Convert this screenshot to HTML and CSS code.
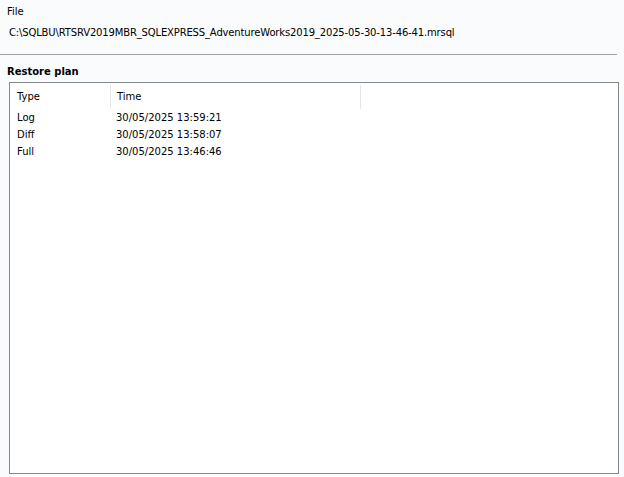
FILE: index.html
```html
<!DOCTYPE html>
<html>
<head>
<link rel="stylesheet" href="styles.css">
</head>
<body>
  <div class="wrapper">
    <div class="file-lbl">File</div>
    <div class="file-path">C:\SQLBU\RTSRV2019MBR_SQLEXPRESS_AdventureWorks2019_2025-05-30-13-46-41.mrsql</div>
    <div class="sep"></div>
    <div class="title">Restore plan</div>
    <div class="list">
      <div class="list-head">
        <div class="col-type">Type</div>
        <div class="col-time">Time</div>
        <div class="col-rest"></div>
      </div>
      <div class="list-row"><div class="col-type">Log</div><div class="col-time">30/05/2025 13:59:21</div></div>
      <div class="list-row"><div class="col-type">Diff</div><div class="col-time">30/05/2025 13:58:07</div></div>
      <div class="list-row"><div class="col-type">Full</div><div class="col-time">30/05/2025 13:46:46</div></div>
    </div>
  </div>
</body>
</html>
```

FILE: styles.css
```css
html, body{
  margin: 0;
  padding: 0;
  background-color: #fafbfd;
}

body{
  font-family: "DejaVu Sans", sans-serif;
  font-size: 10px;
  color: #000;
}

.wrapper{
  width: 624px;
  height: 477px;
  display: flex;
  flex-direction: column;
}

.file-lbl{
  margin: 5px 0 0 7px;
  line-height: 14px;
}

.file-path{
  margin: 7px 0 0 9px;
  line-height: 14px;
  letter-spacing: -0.15px;
}

.sep{
  margin-top: 14px;
  width: 617px;
  height: 1px;
  background-color: #a0a0a0;
}

.title{
  margin: 10px 0 0 7px;
  font-weight: bold;
  line-height: 14px;
}

.list{
  margin: 3px 0 0 9px;
  width: 608px;
  height: 390px;
  border: 1px solid #828790;
  background-color: #fff;
}

.list-head{
  display: flex;
  height: 24px;
  margin-top: 2px;
}

.list-head .col-type,
.list-head .col-time{
  border-right: 1px solid #e5e5e5;
  line-height: 24px;
}

.list-head .col-type{
  width: 93px;
}

.list-head .col-time{
  width: 243px;
}

.list-row{
  display: flex;
  height: 17px;
  line-height: 17px;
}

.col-type{
  width: 93px;
  padding-left: 7px;
}

.col-time{
  padding-left: 6px;
}
```
